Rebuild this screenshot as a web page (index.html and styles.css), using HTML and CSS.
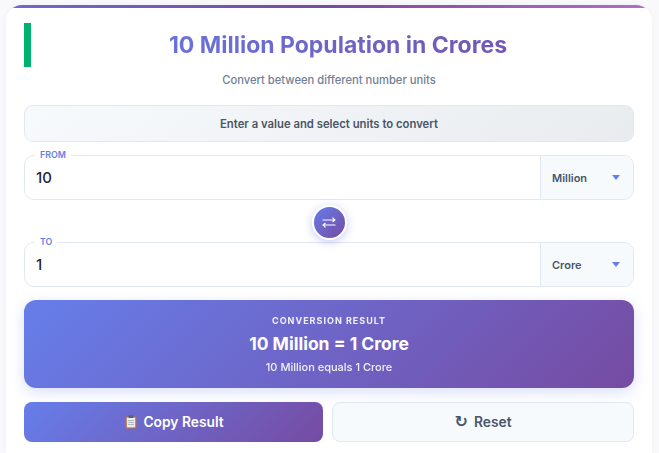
FILE: index.html
```html
<!DOCTYPE html>
<html lang="en">
<head>
    <meta charset="UTF-8">
    <meta name="viewport" content="width=device-width, initial-scale=1.0">
    <title>10 Million Population in Crores</title>
    <link rel="stylesheet" href="styles.css">
</head>
<body>
    <div class="card">
        <div class="header">
            <span class="accent"></span>
            <h1>10 Million Population in Crores</h1>
        </div>
        <p class="subtitle">Convert between different number units</p>
        <div class="hint">Enter a value and select units to convert</div>

        <div class="field">
            <label class="field-label">FROM</label>
            <input class="field-input" type="text" value="10">
            <div class="unit"><span>Million</span><i class="caret"></i></div>
        </div>

        <div class="swap-row">
            <button class="swap-button">
                <svg width="14" height="11" viewBox="0 0 14 11" fill="none" stroke="#fff" stroke-width="1.1">
                    <path d="M0.5 3h12.5M10.5 0.7L13 3L10.5 5"/>
                    <path d="M13.5 8H1M3.5 6L1 8L3.5 10.3"/>
                </svg>
            </button>
        </div>

        <div class="field">
            <label class="field-label">TO</label>
            <input class="field-input" type="text" value="1">
            <div class="unit"><span>Crore</span><i class="caret"></i></div>
        </div>

        <div class="result">
            <div class="result-label">CONVERSION RESULT</div>
            <div class="result-value">10 Million = 1 Crore</div>
            <div class="result-note">10 Million equals 1 Crore</div>
        </div>

        <div class="actions">
            <button class="btn btn-copy">
                <svg class="clip-icon" width="12" height="14" viewBox="0 0 12 14">
                    <rect x="0.5" y="1.5" width="11" height="12" rx="1" fill="#c8693f"/>
                    <rect x="1.8" y="2.6" width="8.4" height="9.8" fill="#e9edf0"/>
                    <rect x="3.5" y="0.3" width="5" height="2.6" rx="0.6" fill="#59636b"/>
                    <path d="M3 5.5h6M3 7.5h6M3 9.5h6" stroke="#aab4bb" stroke-width="0.9"/>
                </svg>
                Copy Result
            </button>
            <button class="btn btn-reset"><span class="reset-icon">↻</span> Reset</button>
        </div>
    </div>
</body>
</html>
```

FILE: styles.css
```css
html, body {
    margin: 0;
    padding: 0;
    height: 100%;
    overflow: hidden;
}

body {
    background-color: #f9f9fb;
    padding: 5px 7px 0 6px;
    box-sizing: border-box;
    font-family: "Inter", "Liberation Sans", sans-serif;
}

.card {
    position: relative;
    overflow: hidden;
    background-color: #fff;
    border-top-left-radius: 16px;
    border-top-right-radius: 16px;
    box-shadow: 0 0 6px rgba(0, 0, 0, 0.04);
    padding: 18px 18px 24px;
    height: 448px;
    box-sizing: border-box;
}

/* franja de color arriba de la tarjeta */
.card::before {
    content: "";
    position: absolute;
    top: 0;
    left: 0;
    right: 0;
    height: 3px;
    background: linear-gradient(90deg, #7069cc, #764ba2 50%, #b76cc4);
}

.header {
    display: flex;
    align-items: center;
    gap: 11px;
    height: 44px;
}

.accent {
    width: 7px;
    height: 44px;
    background-color: #00b26f;
}

h1 {
    flex: 1;
    margin: 0;
    font-size: 23px;
    line-height: 27px;
    font-weight: 700;
    text-align: center;
    background: linear-gradient(135deg, #667eea, #764ba2);
    -webkit-background-clip: text;
    background-clip: text;
    color: transparent;
}

.subtitle {
    margin: 6px 0 0;
    font-size: 11.2px;
    line-height: 14px;
    font-weight: 500;
    text-align: center;
    color: #718096;
}

.hint {
    margin-top: 18px;
    height: 37px;
    box-sizing: border-box;
    display: flex;
    align-items: center;
    justify-content: center;
    background: linear-gradient(135deg, #f7fafc, #e9ecef);
    border: 1px solid #e2e8f0;
    border-radius: 9px;
    font-size: 11.3px;
    font-weight: 600;
    color: #4a5568;
}

.field {
    position: relative;
    display: flex;
    margin-top: 13px;
    height: 45px;
    box-sizing: border-box;
    border: 1px solid #e2e8f0;
    border-radius: 10px;
    background-color: #fff;
}

.field-label {
    position: absolute;
    top: -7px;
    left: 10px;
    padding: 0 5px;
    background-color: #fff;
    font-size: 8.8px;
    line-height: 12px;
    font-weight: 600;
    color: #667eea;
}

.field-input {
    flex: 1;
    min-width: 0;
    border: none;
    outline: none;
    background: transparent;
    padding: 0 11px;
    font-family: inherit;
    font-size: 15px;
    font-weight: 500;
    color: #1f2733;
}

.unit {
    width: 93px;
    display: flex;
    align-items: center;
    justify-content: space-between;
    padding: 0 13px 0 11px;
    box-sizing: border-box;
    background-color: #f7fafc;
    border-left: 1px solid #e2e8f0;
    border-radius: 0 9px 9px 0;
    font-size: 11px;
    font-weight: 600;
    color: #4a5568;
}

.caret {
    width: 0;
    height: 0;
    border-left: 4.5px solid transparent;
    border-right: 4.5px solid transparent;
    border-top: 5px solid #667eea;
}

.swap-row {
    display: flex;
    justify-content: center;
    margin: 5px 0 -11px;
}

.swap-button {
    width: 35px;
    height: 35px;
    padding: 0;
    border: 2px solid #fff;
    border-radius: 50%;
    background: linear-gradient(135deg, #667eea, #764ba2);
    box-shadow: 0 2px 8px rgba(102, 126, 234, 0.4);
    display: flex;
    align-items: center;
    justify-content: center;
    position: relative;
    z-index: 1;
}

.result {
    margin-top: 13px;
    height: 88px;
    box-sizing: border-box;
    padding-top: 15px;
    border-radius: 12px;
    background: linear-gradient(135deg, #667eea, #764ba2);
    box-shadow: 0 4px 14px rgba(102, 126, 234, 0.25);
    text-align: center;
    color: #fff;
}

.result-label {
    font-size: 9px;
    line-height: 12px;
    font-weight: 700;
    letter-spacing: 1px;
    opacity: 0.9;
}

.result-value {
    margin-top: 6px;
    font-size: 17.5px;
    line-height: 22px;
    font-weight: 700;
}

.result-note {
    margin-top: 5px;
    font-size: 11px;
    line-height: 14px;
    font-weight: 500;
    opacity: 0.9;
}

.actions {
    display: grid;
    grid-template-columns: 299px 1fr;
    gap: 9px;
    margin-top: 14px;
}

.btn {
    height: 40px;
    border-radius: 8px;
    font-family: inherit;
    font-size: 13.8px;
    font-weight: 600;
    display: flex;
    align-items: center;
    justify-content: center;
    gap: 6px;
}

.btn-copy {
    border: none;
    padding: 0 0 0 2px;
    background: linear-gradient(135deg, #667eea, #764ba2);
    color: #fff;
}

.btn-reset {
    border: 1px solid #e2e8f0;
    background-color: #f7fafc;
    color: #4a5568;
}

.reset-icon {
    font-family: "DejaVu Sans", sans-serif;
    font-size: 16px;
    line-height: 1;
}
```
